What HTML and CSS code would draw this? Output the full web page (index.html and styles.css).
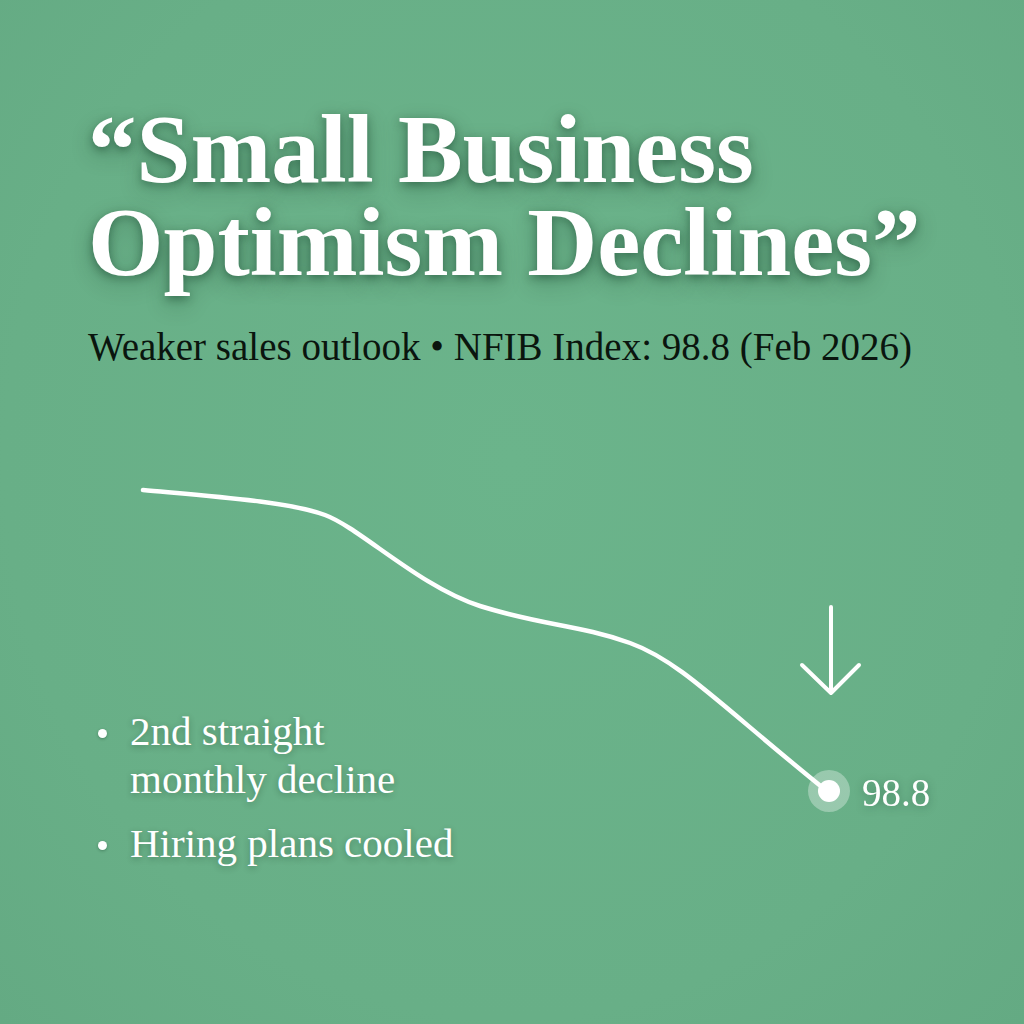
FILE: index.html
```html
<!DOCTYPE html>
<html lang="en">
<head>
<meta charset="utf-8">
<title>Small Business Optimism Declines</title>
<link rel="stylesheet" href="styles.css">
</head>
<body>
<main class="page">
  <svg class="chart" viewBox="0 0 1024 1024" width="1024" height="1024" aria-hidden="true">
    <path class="trend" d="M143 490 C 220 497, 290 502, 325 515 S 420 587, 480 606 S 580 625, 630 643 S 720 705, 828 792"/>
    <path class="arrow" d="M831 607 L831 693 M802 665 L831 693 L859 665"/>
    <circle class="halo" cx="829" cy="791" r="21"/>
    <circle class="dot" cx="829" cy="791" r="11"/>
    <text class="value" x="862" y="806">98.8</text>
  </svg>
  <header class="head">
    <h1 class="title">“Small Business<br>Optimism Declines”</h1>
    <p class="subtitle">Weaker sales outlook • NFIB Index: 98.8 (Feb 2026)</p>
  </header>
  <ul class="points">
    <li class="point">2nd straight<br>monthly decline</li>
    <li class="point">Hiring plans cooled</li>
  </ul>
</main>
</body>
</html>
```
FILE: styles.css
```css
html, body {
  margin: 0;
  padding: 0;
}
body {
  background: #69b189;
  font-family: "Liberation Serif", "DejaVu Serif", serif;
}
.page {
  position: relative;
  width: 1024px;
  height: 1024px;
  box-sizing: border-box;
  padding: 103px 0 0 88px;
  overflow: hidden;
  background: radial-gradient(ellipse at 50% 45%, #6bb48b 0%, #68af87 70%, #64aa83 100%);
}
.chart {
  position: absolute;
  left: 0;
  top: 0;
}
.trend {
  fill: none;
  stroke: #ffffff;
  stroke-width: 4.5;
  stroke-linecap: round;
  stroke-linejoin: round;
}
.arrow {
  fill: none;
  stroke: #ffffff;
  stroke-width: 4;
  stroke-linecap: round;
  stroke-linejoin: round;
}
.halo {
  fill: rgba(255, 255, 255, 0.32);
}
.dot {
  fill: #ffffff;
}
.value {
  font-family: "Liberation Serif", "DejaVu Serif", serif;
  font-size: 39px;
  fill: #ffffff;
  filter: drop-shadow(0 2px 4px rgba(0, 40, 20, 0.3));
}
.head {
  position: relative;
}
.title {
  margin: 0;
  font-size: 97px;
  line-height: 93px;
  font-weight: 700;
  color: #ffffff;
  text-shadow: 0 3px 8px rgba(0, 40, 20, 0.38), 0 8px 22px rgba(0, 40, 20, 0.28);
}
.subtitle {
  margin: 34px 0 0 0;
  font-size: 39px;
  line-height: 48px;
  color: #0a150e;
}
.points {
  position: relative;
  list-style: none;
  margin: 336px 0 0 10px;
  padding: 0;
}
.point {
  display: flex;
  align-items: flex-start;
  gap: 23px;
  font-size: 41px;
  line-height: 48px;
  color: #ffffff;
  text-shadow: 0 2px 6px rgba(0, 40, 20, 0.3);
}
.point::before {
  content: "";
  flex: none;
  width: 9px;
  height: 9px;
  margin-top: 22px;
  border-radius: 50%;
  background: #ffffff;
  box-shadow: 0 1px 3px rgba(0, 40, 20, 0.3);
}
.point + .point {
  margin-top: 16px;
}
```
